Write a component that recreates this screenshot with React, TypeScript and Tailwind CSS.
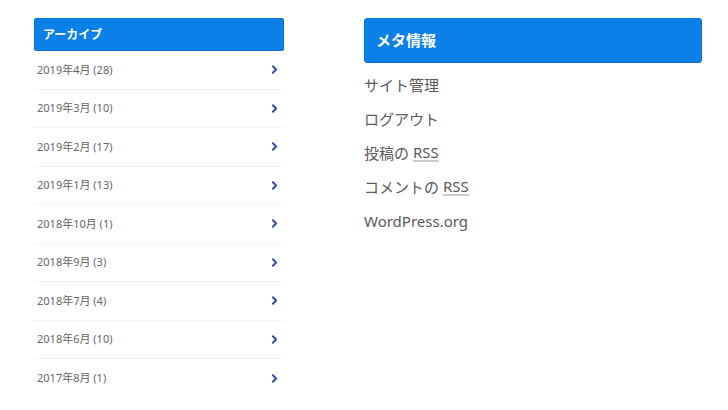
import { ChevronRight } from "lucide-react";

const archives = [
  "2019年4月 (28)",
  "2019年3月 (10)",
  "2019年2月 (17)",
  "2019年1月 (13)",
  "2018年10月 (1)",
  "2018年9月 (3)",
  "2018年7月 (4)",
  "2018年6月 (10)",
  "2017年8月 (1)",
];

const font = { fontFamily: '"Noto Sans", "Noto Sans CJK JP", sans-serif' };

export default function App() {
  return (
    <div className="w-[728px] h-[410px] bg-white overflow-hidden flex" style={font}>
      {/* アーカイブ */}
      <div className="ml-[34px] mt-[18px] w-[250px] flex flex-col">
        <div className="h-[33px] bg-[#0a80e8] border border-[#0873d2] rounded-[2px] flex items-center px-[8px]">
          <span className="text-white text-[12px] font-bold">アーカイブ</span>
        </div>
        {archives.map((a) => (
          <div
            key={a}
            className="h-[38.5px] flex items-center justify-between px-[3px] border-b border-[#f2f2f2] last:border-b-0"
          >
            <span className="text-[11px] text-[#666]">{a}</span>
            <ChevronRight className="w-[13px] h-[13px] text-[#3049b4]" strokeWidth={3.5} />
          </div>
        ))}
      </div>

      {/* メタ情報 */}
      <div className="ml-[80px] mt-[18px] w-[338px] flex flex-col">
        <div className="h-[45px] bg-[#0a80e8] border border-[#0873d2] rounded-[3px] flex items-center px-[11px]">
          <span className="text-white text-[15px] font-bold">メタ情報</span>
        </div>
        <ul className="mt-[5px] text-[15px] text-[#5a5a5a]">
          <li className="h-[34px] flex items-center">サイト管理</li>
          <li className="h-[34px] flex items-center">ログアウト</li>
          <li className="h-[34px] flex items-center">
            投稿の&nbsp;
            <abbr className="no-underline border-b-2 border-[#ccc] leading-[16px]">RSS</abbr>
          </li>
          <li className="h-[34px] flex items-center">
            コメントの&nbsp;
            <abbr className="no-underline border-b-2 border-[#ccc] leading-[16px]">RSS</abbr>
          </li>
          <li className="h-[34px] flex items-center">WordPress.org</li>
        </ul>
      </div>
    </div>
  );
}
